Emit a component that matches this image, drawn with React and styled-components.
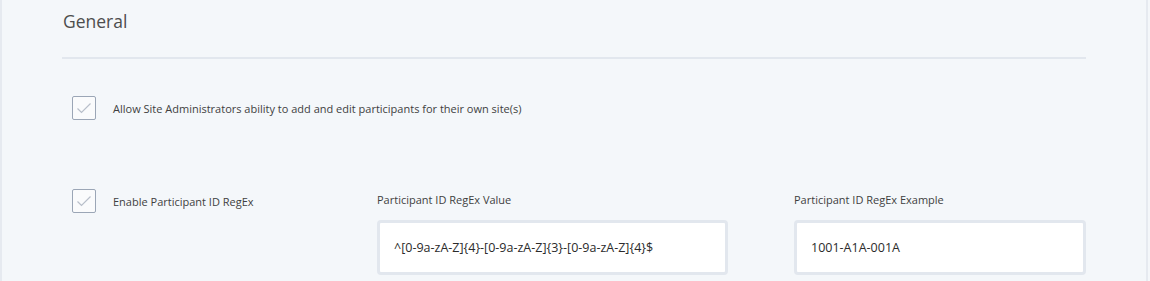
import React from "react";
import styled, { createGlobalStyle } from "styled-components";

const Global = createGlobalStyle`
  html, body { margin: 0; padding: 0; background: #f4f7fa; }
  body { font-family: "Open Sans", "Noto Sans", sans-serif; }
`;

const Page = styled.div`
  width: 1148px;
  height: 281px;
  box-sizing: border-box;
  background: #f4f7fa;
  border-left: 2px solid #e6eaf0;
  border-right: 2px solid #e6eaf0;
  padding: 0 60px;
  overflow: hidden;
`;

const Content = styled.div`
  width: 1024px;
`;

const Title = styled.h2`
  margin: 0;
  padding: 9px 0 0 1px;
  font-size: 17.5px;
  line-height: 24px;
  font-weight: 400;
  color: #4d4d4d;
`;

const Divider = styled.hr`
  margin: 24px 0 0;
  border: 0;
  height: 2px;
  background: #e2e7ee;
`;

const Row = styled.div`
  display: grid;
  grid-template-columns: 315px 417px 292px;
  align-items: start;
  margin-top: ${(p) => p.$top}px;
`;

const CheckCell = styled.label`
  display: flex;
  align-items: center;
  gap: 17px;
  padding-left: 10px;
  grid-column: ${(p) => (p.$wide ? "1 / -1" : "auto")};
`;

const Box = styled.span`
  width: 24px;
  height: 24px;
  box-sizing: border-box;
  border: 1.5px solid #9ba6b6;
  border-radius: 2px;
  background: #fafbfc;
  display: flex;
  align-items: center;
  justify-content: center;
  flex: none;
`;

const Text = styled.span`
  font-size: 11px;
  color: #3f3f3f;
`;

const Field = styled.div`
  display: flex;
  flex-direction: column;
  padding-top: 4px;
`;

const FieldLabel = styled.span`
  font-size: 11px;
  line-height: 14px;
  color: #3f3f3f;
`;

const Input = styled.input`
  margin: 13px 0 0;
  width: ${(p) => p.$w}px;
  height: 55px;
  box-sizing: border-box;
  border: 3px solid #e2e7ee;
  border-radius: 4px;
  background: #ffffff;
  padding: 0 0 0 14px;
  font-family: "Open Sans", "Noto Sans", sans-serif;
  font-size: 12.5px;
  color: #2b2b2b;
  outline: none;
`;

const Check = () => (
  <svg width="16" height="12" viewBox="0 0 16 12">
    <path d="M1.5 6.5 L5.5 10.5 L14.5 1.5" fill="none" stroke="#b8bfca" strokeWidth="1.2" />
  </svg>
);

export default function App() {
  return (
    <>
      <Global />
      <Page>
        <Content>
          <Title>General</Title>
          <Divider />
          <Row $top={37}>
            <CheckCell $wide>
              <Box><Check /></Box>
              <Text>Allow Site Administrators ability to add and edit participants for their own site(s)</Text>
            </CheckCell>
          </Row>
          <Row $top={69}>
            <CheckCell>
              <Box><Check /></Box>
              <Text>Enable Participant ID RegEx</Text>
            </CheckCell>
            <Field>
              <FieldLabel>Participant ID RegEx Value</FieldLabel>
              <Input $w={351} readOnly value="^[0-9a-zA-Z]{4}-[0-9a-zA-Z]{3}-[0-9a-zA-Z]{4}$" />
            </Field>
            <Field>
              <FieldLabel>Participant ID RegEx Example</FieldLabel>
              <Input $w={292} readOnly value="1001-A1A-001A" />
            </Field>
          </Row>
        </Content>
      </Page>
    </>
  );
}
